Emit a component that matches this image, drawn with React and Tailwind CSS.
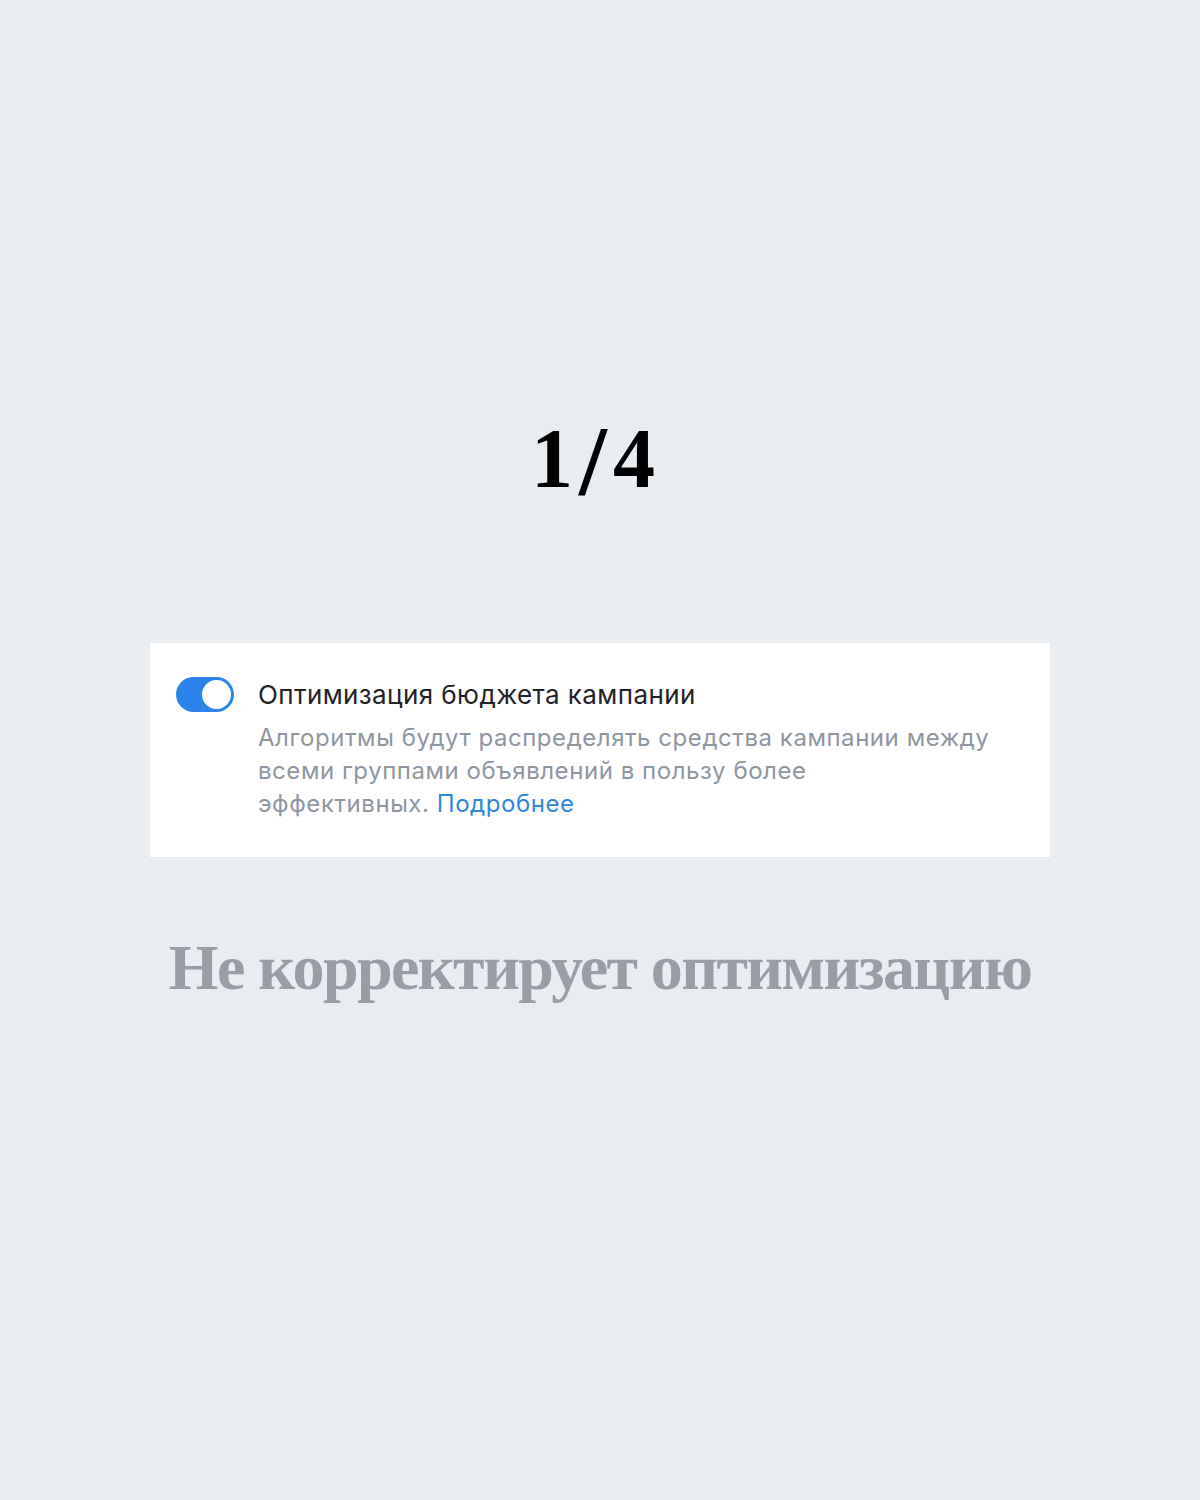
import React from "react";

// Switch in "on" state
function Toggle() {
  return (
    <div className="relative w-[58px] h-[35px] rounded-full bg-[#2c84ea] shrink-0">
      <div className="absolute right-[3px] top-[3px] w-[29px] h-[29px] rounded-full bg-white" />
    </div>
  );
}

export default function App() {
  return (
    <div className="w-[1200px] h-[1500px] bg-[#e8edf1] flex flex-col items-center">
      <h1
        className="mt-[404px] mr-[8px] h-[100px] flex items-baseline text-[84px] leading-[100px] font-bold text-black tracking-[6px]"
        style={{ fontFamily: '"Liberation Serif", serif' }}
      >
        <span>1</span>
        <span className="inline-block text-[100px] leading-[100px] translate-y-[7px]">/</span>
        <span>4</span>
      </h1>

      <div
        className="mt-[139px] w-[900px] h-[214px] bg-white flex gap-[24px] pl-[26px] pt-[34px]"
        style={{ fontFamily: 'Inter, "Noto Sans", sans-serif' }}
      >
        <Toggle />
        <div className="flex flex-col">
          <div className="text-[26px] leading-[36px] text-[#1f2226] tracking-[0.4px]">
            Оптимизация бюджета кампании
          </div>
          <p className="mt-[8px] text-[24px] leading-[33px] text-[#8e969f] tracking-[0.55px]">
            Алгоритмы будут распределять средства кампании между
            <br />
            всеми группами объявлений в пользу более
            <br />
            эффективных. <span className="text-[#2f86e0]">Подробнее</span>
          </p>
        </div>
      </div>

      <h2
        className="mt-[71px] text-[64px] leading-[80px] font-bold text-[#979ea6] tracking-[-1.6px]"
        style={{ fontFamily: '"Liberation Serif", serif' }}
      >
        Не корректирует оптимизацию
      </h2>
    </div>
  );
}
